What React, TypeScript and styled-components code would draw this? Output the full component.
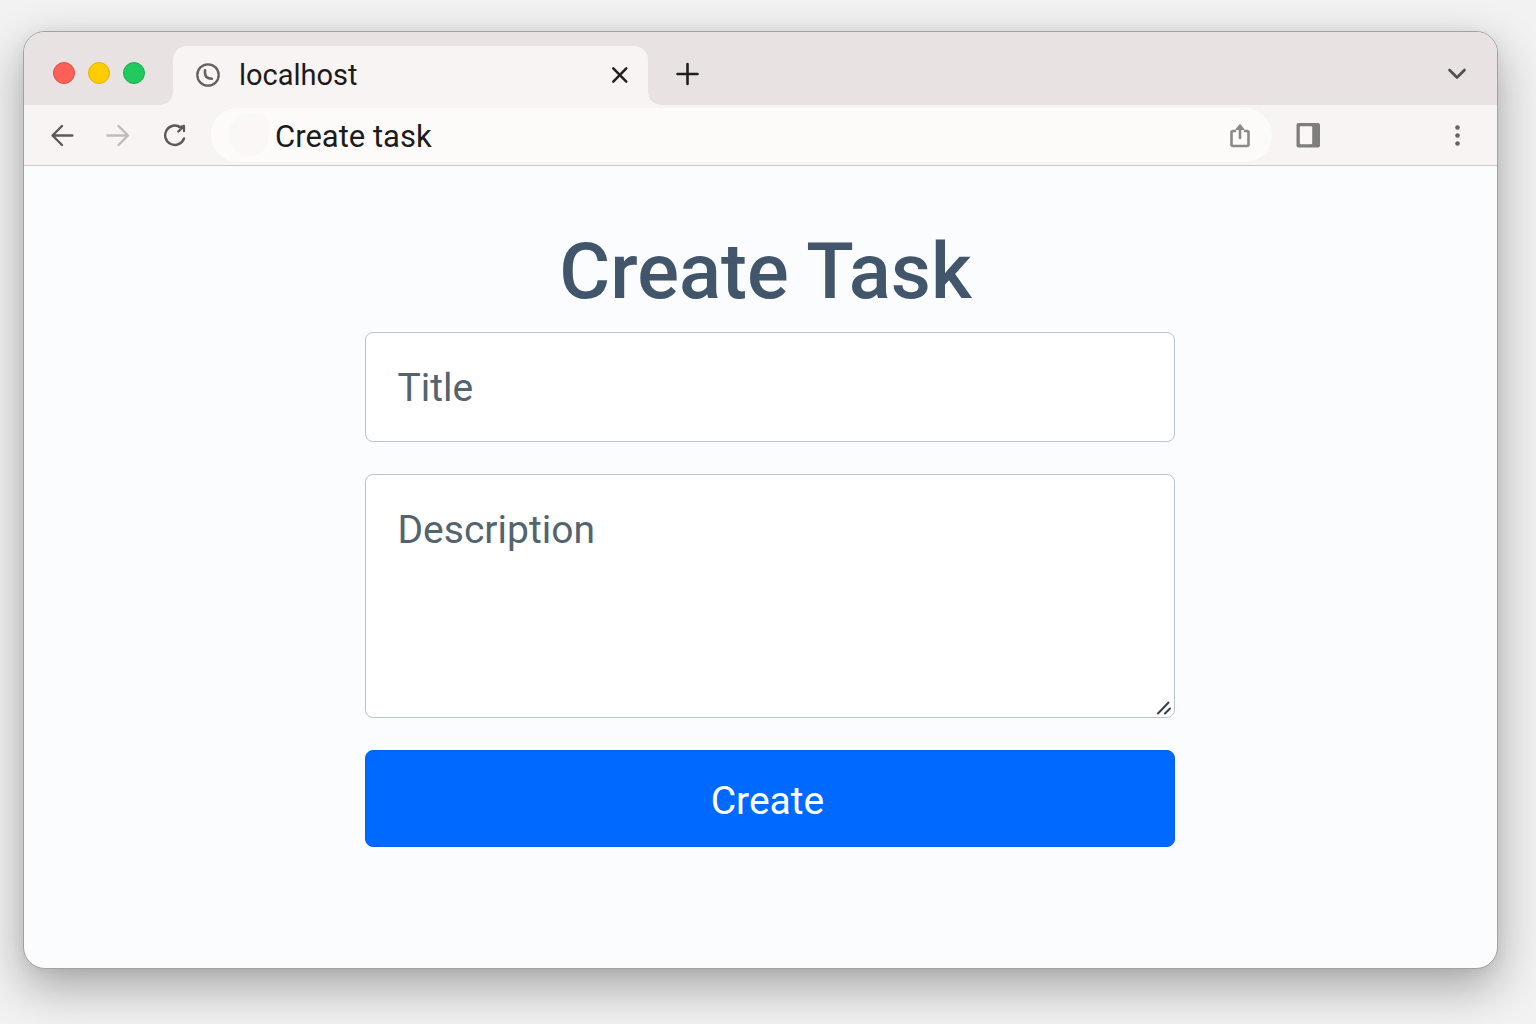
import React from "react";
import styled, { createGlobalStyle } from "styled-components";

const GlobalStyle = createGlobalStyle`
  *, *::before, *::after { box-sizing: border-box; }
  body {
    margin: 0;
    background: #f2f2f2;
    font-family: Roboto, "Liberation Sans", sans-serif;
  }
`;

const Desktop = styled.div`
  display: flex;
  min-height: 100vh;
  padding: 31px 38px 55px 23px;
  background: #f2f2f2;
  overflow: hidden;
`;

const BrowserWindow = styled.section`
  display: flex;
  flex: 1;
  flex-direction: column;
  overflow: hidden;
  border: 1px solid #a3a2a2;
  border-radius: 22px;
  background: #fbfcfd;
  box-shadow: 0 18px 48px rgba(0, 0, 0, 0.32), 0 2px 14px rgba(0, 0, 0, 0.05);
`;

const TabStrip = styled.header`
  display: flex;
  align-items: flex-end;
  height: 73px;
  padding-right: 24px;
  background: #e8e2e2;
`;

const TrafficLights = styled.div`
  display: flex;
  align-self: stretch;
  align-items: center;
  gap: 13px;
  width: 149px;
  padding: 9px 0 0 29px;
`;

const Light = styled.button<{ $fill: string; $edge: string }>`
  width: 22px;
  height: 22px;
  padding: 0;
  border: 1px solid ${(p) => p.$edge};
  border-radius: 50%;
  background: ${(p) => p.$fill};
`;

const Tab = styled.div`
  position: relative;
  display: flex;
  align-items: center;
  width: 475px;
  height: 59px;
  padding: 0 14px 2px 23px;
  border-radius: 14px 14px 0 0;
  background: #f8f4f3;

  &::before,
  &::after {
    content: "";
    position: absolute;
    bottom: 0;
    width: 12px;
    height: 12px;
  }
  &::before {
    right: 100%;
    background: radial-gradient(circle at 0 0, transparent 11px, #f8f4f3 12px);
  }
  &::after {
    left: 100%;
    background: radial-gradient(circle at 100% 0, transparent 11px, #f8f4f3 12px);
  }
`;

const TabTitle = styled.span`
  flex: 1;
  padding-left: 19px;
  color: #1c1b1b;
  font-size: 29px;
  line-height: 36px;
`;

const IconButton = styled.button<{ $color?: string }>`
  display: grid;
  flex: none;
  place-items: center;
  width: 28px;
  height: 32px;
  padding: 0;
  border: 0;
  background: none;
  color: ${(p) => p.$color ?? "#5b5a5b"};

  svg { display: block; }
`;

const StripActions = styled.div`
  display: flex;
  flex: 1;
  align-items: center;
  justify-content: space-between;
  height: 59px;
  padding: 0 2px 3px 25px;
`;

const Toolbar = styled.nav`
  display: flex;
  align-items: center;
  height: 61px;
  padding: 0 26px 0 24px;
  border-bottom: 1px solid #cbc8c8;
  background: #f8f4f3;
`;

const History = styled.div`
  display: flex;
  gap: 28px;
  width: 163px;
`;

const AddressBar = styled.div`
  display: flex;
  flex: 1;
  align-items: center;
  min-width: 0;
  height: 54px;
  padding: 0 18px;
  border-radius: 27px;
  background: #fdfbfa;
`;

const SiteBadge = styled.span`
  flex: none;
  width: 40px;
  height: 42px;
  border-radius: 20px 12px 20px 20px;
  background: #faf7f6;
`;

const AddressInput = styled.input`
  flex: 1;
  min-width: 0;
  height: 40px;
  padding: 2px 6px 0;
  border: 0;
  outline: 0;
  background: none;
  color: #1c1b1b;
  font: 400 31px/36px Roboto, "Liberation Sans", sans-serif;
`;

const ToolbarActions = styled.div`
  display: flex;
  justify-content: space-between;
  width: 199px;
  padding-left: 22px;
`;

const Page = styled.main`
  display: flex;
  flex: 1;
  flex-direction: column;
  align-items: center;
  padding: 58px 0 64px 18px;
`;

const Heading = styled.h1`
  margin: 0 0 12px;
  padding-right: 8px;
  color: #42566b;
  font-size: 78px;
  font-weight: 500;
  line-height: 96px;
`;

const Form = styled.form`
  display: flex;
  flex-direction: column;
  gap: 32px;
  width: 100%;
  max-width: 810px;
`;

const fieldStyles = `
  display: block;
  width: 100%;
  padding: 31px 32px 29px;
  border: 1px solid #b9c4d2;
  border-radius: 8px;
  outline: 0;
  background: #ffffff;
  color: #42566b;
  font: 400 39px/48px Roboto, "Liberation Sans", sans-serif;

  &::placeholder { color: #54646f; opacity: 1; }
`;

const TitleInput = styled.input`
  ${fieldStyles}
  height: 110px;
`;

const DescriptionInput = styled.textarea`
  ${fieldStyles}
  height: 244px;
  resize: none;
`;

const TextareaFrame = styled.div`
  position: relative;
`;

const Grip = styled.svg`
  position: absolute;
  right: 3px;
  bottom: 3px;
  pointer-events: none;
`;

const SubmitButton = styled.button`
  height: 97px;
  padding: 4px 4px 0 0;
  border: 1px solid #0a5cf5;
  border-radius: 8px;
  background: #0069ff;
  color: #ffffff;
  font: 400 39px/48px Roboto, "Liberation Sans", sans-serif;
`;

const stroke = {
  fill: "none",
  stroke: "currentColor",
  strokeLinecap: "round" as const,
  strokeLinejoin: "round" as const,
};

export default function App() {
  return (
    <Desktop>
      <GlobalStyle />
      <BrowserWindow>
        <TabStrip>
          <TrafficLights>
            <Light aria-label="Close window" $fill="#fb6158" $edge="#e5483f" />
            <Light aria-label="Minimize window" $fill="#ffcc00" $edge="#e9b200" />
            <Light aria-label="Zoom window" $fill="#22c95f" $edge="#12ae49" />
          </TrafficLights>
          <Tab>
            <svg width="24" height="24" viewBox="0 0 24 24" {...stroke} stroke="#626163" strokeWidth="2.3" aria-hidden="true">
              <circle cx="12" cy="12" r="10.7" />
              <path d="M9 7.300v2.200c0 3.700 2.300 6.200 6.800 6.200" strokeWidth="2.6" />
            </svg>
            <TabTitle>localhost</TabTitle>
            <IconButton aria-label="Close tab" $color="#1f1f1f">
              <svg width="18" height="18" viewBox="0 0 18 18" {...stroke} strokeWidth="2.5">
                <path d="M2.300 2.300l13 13.400M15.300 2.300L2.300 15.700" />
              </svg>
            </IconButton>
          </Tab>
          <StripActions>
            <IconButton aria-label="New tab" $color="#1f1f1f">
              <svg width="24" height="24" viewBox="0 0 24 24" {...stroke} strokeWidth="2.6">
                <path d="M12.500 2v20M2.500 12h20" />
              </svg>
            </IconButton>
            <IconButton aria-label="Search tabs" $color="#4f4f50">
              <svg width="20" height="14" viewBox="0 0 20 14" {...stroke} strokeWidth="2.6">
                <path d="M2.500 3L10 10.500l7.500-7.500" />
              </svg>
            </IconButton>
          </StripActions>
        </TabStrip>

        <Toolbar aria-label="Browser toolbar">
          <History>
            <IconButton aria-label="Back">
              <svg width="24" height="24" viewBox="0 0 24 24" {...stroke} strokeWidth="2.4">
                <path d="M22.300 12.500H3M12 3L2.500 12.500 12 22" />
              </svg>
            </IconButton>
            <IconButton aria-label="Forward" $color="#bfbcbc">
              <svg width="24" height="24" viewBox="0 0 24 24" {...stroke} strokeWidth="2.4">
                <path d="M1.500 12.500H21M12.500 3L22 12.500 12.500 22" />
              </svg>
            </IconButton>
            <IconButton aria-label="Reload">
              <svg width="24" height="24" viewBox="0 0 24 24" {...stroke} strokeWidth="2.4">
                <path d="M22 15.500a9.700 9.700 0 1 1-3.500-11.200" />
                <path d="M22 2.800v5.400M22 2.800l-5 1.400M22 3.200L16.200 8.600" strokeWidth="2.200" />
              </svg>
            </IconButton>
          </History>
          <AddressBar>
            <SiteBadge />
            <AddressInput aria-label="Address" defaultValue="Create task" />
            <IconButton aria-label="Share" $color="#8a8889">
              <svg width="22" height="26" viewBox="0 0 22 26" {...stroke} strokeWidth="2.6">
                <path d="M6 9H4Q2.500 9 2.500 10.500V22.500Q2.500 24 4 24H18Q19.500 24 19.500 22.500V10.500Q19.500 9 18 9H16M11 16V5" />
                <path d="M7.200 7.400L11 2.600 14.800 7.400z" fill="currentColor" strokeWidth="1.200" />
              </svg>
            </IconButton>
          </AddressBar>
          <ToolbarActions>
            <IconButton aria-label="Side panel" $color="#7f7d7e">
              <svg width="24" height="26" viewBox="0 0 24 26">
                <rect x="0.500" y="1" width="23.500" height="24.500" rx="2" fill="currentColor" />
                <rect x="3.800" y="4.300" width="12.400" height="18" rx="1" fill="#faf7f6" />
              </svg>
            </IconButton>
            <IconButton aria-label="Browser menu" $color="#656364">
              <svg width="6" height="22" viewBox="0 0 6 22" fill="currentColor">
                <circle cx="3.500" cy="3.500" r="2.300" />
                <circle cx="3.500" cy="11.500" r="2.300" />
                <circle cx="3.500" cy="19.500" r="2.300" />
              </svg>
            </IconButton>
          </ToolbarActions>
        </Toolbar>

        <Page>
          <Heading>Create Task</Heading>
          <Form onSubmit={(event) => event.preventDefault()}>
            <TitleInput aria-label="Title" placeholder="Title" />
            <TextareaFrame>
              <DescriptionInput aria-label="Description" placeholder="Description" />
              <Grip width="16" height="14" viewBox="0 0 16 14" {...stroke} stroke="#33404e" strokeWidth="2">
                <path d="M2 12.500L12.500 1.500M9 12.500l5-5" />
              </Grip>
            </TextareaFrame>
            <SubmitButton type="submit">Create</SubmitButton>
          </Form>
        </Page>
      </BrowserWindow>
    </Desktop>
  );
}
